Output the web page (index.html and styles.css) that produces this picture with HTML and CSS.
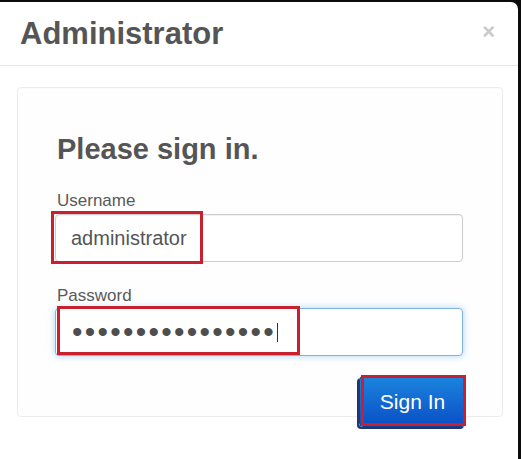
FILE: index.html
```html
<!DOCTYPE html>
<html>
<head>
<meta charset="utf-8">
<link rel="stylesheet" href="styles.css">
</head>
<body>
<div class="modal">
  <div class="modal-header">
    <h3 class="title">Administrator</h3>
    <span class="close">×</span>
  </div>
  <div class="modal-body">
    <div class="well">
      <h2 class="heading">Please sign in.</h2>
      <label class="label label-user">Username</label>
      <div class="field">
        <div class="input">administrator</div>
        <div class="mark mark-user"></div>
      </div>
      <label class="label label-pass">Password</label>
      <div class="field">
        <div class="input input-focus"><span class="dots">••••••••••••••••</span><span class="caret"></span></div>
        <div class="mark mark-pass"></div>
      </div>
      <div class="actions">
        <div class="field">
          <button class="btn">Sign In</button>
          <div class="mark mark-btn"></div>
        </div>
      </div>
    </div>
  </div>
</div>
</body>
</html>
```
FILE: styles.css
```css
html, body {
  margin: 0;
  padding: 0;
}
body {
  background: #0b0b0b;
  width: 521px;
  height: 459px;
  overflow: hidden;
  font-family: "Liberation Sans", Arial, sans-serif;
}
.modal {
  margin-top: 2px;
  width: 518px;
  height: 457px;
  background: #ffffff;
  border-top-right-radius: 7px;
  overflow: hidden;
}
.modal-header {
  height: 64px;
  box-sizing: border-box;
  padding: 15px 23px 15px 20px;
  border-bottom: 1px solid #e6e6e6;
  display: flex;
  justify-content: space-between;
  align-items: center;
}
.title {
  margin: 0;
  font-size: 31px;
  line-height: 34px;
  font-weight: bold;
  color: #555555;
}
.close {
  font-size: 22px;
  font-weight: bold;
  color: #c9c9c9;
  line-height: 22px;
  margin-top: -3px;
}
.modal-body {
  padding: 21px 15px 0 17px;
}
.well {
  box-sizing: border-box;
  height: 330px;
  border: 1px solid #ececec;
  border-radius: 4px;
  background: #fefefe;
  padding: 45px 39px 0 39px;
  box-shadow: inset 0 1px 1px rgba(0,0,0,0.02);
}
.heading {
  margin: 0;
  font-size: 29px;
  line-height: 32px;
  font-weight: bold;
  color: #555555;
}
.label {
  display: block;
  font-size: 17px;
  line-height: 20px;
  color: #595959;
}
.label-user {
  margin-top: 26px;
  margin-bottom: 3px;
}
.label-pass {
  margin-top: 24px;
  margin-bottom: 2px;
}
.field {
  position: relative;
}
.input {
  box-sizing: border-box;
  height: 48px;
  margin-left: -2px;
  border: 1px solid #cccccc;
  border-radius: 4px;
  background: #ffffff;
  padding: 0 14px 0 15px;
  display: flex;
  align-items: center;
  font-size: 20px;
  line-height: 24px;
  color: #555555;
  box-shadow: inset 0 1px 1px rgba(0,0,0,0.06);
}
.input-focus {
  border-color: #7fb3e0;
  box-shadow: 0 0 7px rgba(102,175,233,0.55);
  padding-left: 16px;
}
.dots {
  font-size: 30px;
  letter-spacing: 2.25px;
  color: #4e4e4e;
  line-height: 24px;
}
.caret {
  display: inline-block;
  width: 1px;
  height: 19px;
  background: #333333;
  margin-left: 1px;
}
.actions {
  margin-top: 20px;
  display: flex;
  justify-content: flex-end;
  margin-right: -3px;
}
.btn {
  width: 107px;
  height: 51px;
  border: 1px solid #0a3f9a;
  border-radius: 4px;
  background: linear-gradient(#1b84dd, #0a4fc6);
  color: #ffffff;
  font-family: "Liberation Sans", Arial, sans-serif;
  font-size: 21px;
  padding: 0;
  box-shadow: -2px 2px 0 #23356b;
}
.mark {
  position: absolute;
  box-sizing: border-box;
  border: 3px solid #c8202e;
  pointer-events: none;
}
.mark-user {
  left: -6px;
  top: -3px;
  width: 152px;
  height: 53px;
}
.mark-pass {
  left: 0;
  top: -2px;
  width: 243px;
  height: 49px;
}
.mark-btn {
  left: 2px;
  top: -1px;
  width: 105px;
  height: 51px;
}
```
